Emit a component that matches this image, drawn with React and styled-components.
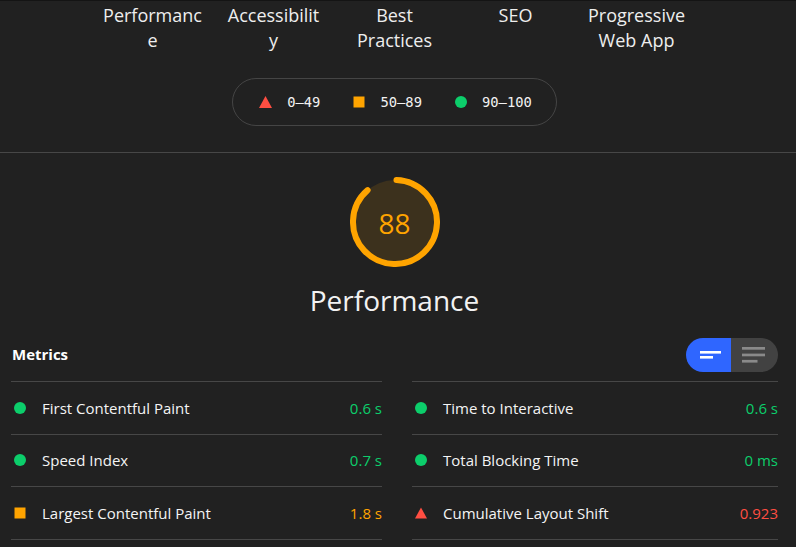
import React from "react";
import styled, { createGlobalStyle } from "styled-components";

const GlobalStyle = createGlobalStyle`
  html, body {
    margin: 0;
    padding: 0;
    background: #212121;
  }
  body {
    font-family: "Open Sans", "Noto Sans", sans-serif;
    color: #eeeeee;
    border-top: 1px solid #141414;
  }
`;

const Page = styled.div`
  width: 796px;
  height: 546px;
  overflow: hidden;
`;

const Header = styled.div`
  display: flex;
  flex-direction: column;
  align-items: center;
  padding: 2px 18px 26px 11px;
  border-bottom: 1px solid #474747;
`;

const CategoryRow = styled.div`
  display: flex;
  justify-content: center;
`;

const Category = styled.div`
  width: 121px;
  display: flex;
  justify-content: center;
`;

const CategoryLabel = styled.div`
  width: 99px;
  font-size: 18px;
  line-height: 25px;
  text-align: center;
  overflow-wrap: anywhere;
  color: #eeeeee;
`;

const Legend = styled.div`
  margin-top: 25px;
  height: 46px;
  display: flex;
  align-items: center;
  gap: 33px;
  padding: 0 24px 0 26px;
  border: 1px solid #454545;
  border-radius: 24px;
`;

const LegendItem = styled.div`
  display: flex;
  align-items: center;
  gap: 15px;
  font-family: "DejaVu Sans Mono", "Liberation Mono", monospace;
  font-size: 13.8px;
  color: #f2f2f2;
`;

const COLORS = {
  fail: "#ff4e42",
  average: "#ffa400",
  pass: "#0cce6b",
};

const Shape = ({ kind }) => {
  if (kind === "fail") {
    return (
      <svg width="13" height="12" viewBox="0 0 13 12">
        <polygon points="6.5,0 13,12 0,12" fill={COLORS.fail} />
      </svg>
    );
  }
  if (kind === "average") {
    return (
      <svg width="12" height="12" viewBox="0 0 12 12">
        <rect x="0.5" y="0.5" width="11" height="11" fill={COLORS.average} />
      </svg>
    );
  }
  return (
    <svg width="12" height="12" viewBox="0 0 12 12">
      <circle cx="6" cy="6" r="6" fill={COLORS.pass} />
    </svg>
  );
};

const Body = styled.div`
  padding: 0 18px 0 11px;
  display: flex;
  flex-direction: column;
`;

const Summary = styled.div`
  display: flex;
  flex-direction: column;
  align-items: center;
  padding-top: 24px;
`;

const Gauge = styled.div`
  position: relative;
  width: 90px;
  height: 90px;
`;

const Percentage = styled.div`
  position: absolute;
  inset: 0;
  display: flex;
  align-items: center;
  justify-content: center;
  font-size: 28px;
  color: #ffa400;
  padding-top: 1px;
`;

const Title = styled.div`
  margin-top: 15px;
  font-size: 28px;
  line-height: 36px;
  color: #f2f2f2;
`;

const MetricsHeader = styled.div`
  margin-top: 20px;
  margin-bottom: 9px;
  height: 34px;
  display: flex;
  align-items: center;
  justify-content: space-between;
`;

const MetricsTitle = styled.div`
  padding: 0 0 3px 1px;
  font-size: 15px;
  font-weight: 700;
  color: #ffffff;
`;

const Toggle = styled.div`
  display: flex;
  height: 34px;
  border-radius: 17px;
  overflow: hidden;
`;

const ToggleButton = styled.div`
  width: ${(p) => p.$w}px;
  display: flex;
  align-items: center;
  justify-content: ${(p) => (p.$active ? "flex-end" : "flex-start")};
  padding: ${(p) => (p.$active ? "0 10px 0 0" : "0 0 0 11px")};
  box-sizing: border-box;
  background: ${(p) => (p.$active ? "#2f66ff" : "#424242")};
`;

const Grid = styled.div`
  display: grid;
  grid-template-columns: 371px 1fr;
  column-gap: 30px;
`;

const Column = styled.div`
  border-top: 1px solid #474747;
`;

const MetricRow = styled.div`
  display: flex;
  align-items: center;
  height: 52.67px;
  padding: 0 0 0 3px;
  box-sizing: border-box;
  border-bottom: 1px solid #474747;
  font-size: 15px;
`;

const MetricIcon = styled.div`
  width: 12px;
  display: flex;
  margin-right: 16px;
`;

const MetricName = styled.div`
  flex: 1;
  color: #f4f4f4;
`;

const MetricValue = styled.div`
  color: ${(p) => COLORS[p.$kind]};
`;

const categories = [
  "Performance",
  "Accessibility",
  "Best Practices",
  "SEO",
  "Progressive Web App",
];

const left = [
  { name: "First Contentful Paint", value: "0.6 s", kind: "pass" },
  { name: "Speed Index", value: "0.7 s", kind: "pass" },
  { name: "Largest Contentful Paint", value: "1.8 s", kind: "average" },
];

const right = [
  { name: "Time to Interactive", value: "0.6 s", kind: "pass" },
  { name: "Total Blocking Time", value: "0 ms", kind: "pass" },
  { name: "Cumulative Layout Shift", value: "0.923", kind: "fail" },
];

const score = 88;
const circumference = 2 * Math.PI * 42;

function MetricList({ items }) {
  return (
    <Column>
      {items.map((m) => (
        <MetricRow key={m.name}>
          <MetricIcon>
            <Shape kind={m.kind} />
          </MetricIcon>
          <MetricName>{m.name}</MetricName>
          <MetricValue $kind={m.kind}>{m.value}</MetricValue>
        </MetricRow>
      ))}
    </Column>
  );
}

export default function App() {
  return (
    <Page>
      <GlobalStyle />
      <Header>
        <CategoryRow>
          {categories.map((c) => (
            <Category key={c}>
              <CategoryLabel>{c}</CategoryLabel>
            </Category>
          ))}
        </CategoryRow>
        <Legend>
          <LegendItem>
            <Shape kind="fail" />
            0–49
          </LegendItem>
          <LegendItem>
            <Shape kind="average" />
            50–89
          </LegendItem>
          <LegendItem>
            <Shape kind="pass" />
            90–100
          </LegendItem>
        </Legend>
      </Header>
      <Body>
        <Summary>
          <Gauge>
            <svg width="90" height="90" viewBox="0 0 90 90">
              <circle
                cx="45"
                cy="45"
                r="42"
                fill="rgba(255,164,0,0.12)"
                stroke="none"
              />
              <circle
                cx="45"
                cy="45"
                r="42"
                fill="none"
                stroke="#ffa400"
                strokeWidth="6"
                strokeLinecap="round"
                strokeDasharray={`${(score / 100) * circumference} ${circumference}`}
                transform="rotate(-88 45 45)"
              />
            </svg>
            <Percentage>{score}</Percentage>
          </Gauge>
          <Title>Performance</Title>
        </Summary>
        <MetricsHeader>
          <MetricsTitle>Metrics</MetricsTitle>
          <Toggle>
            <ToggleButton $active $w={45}>
              <svg width="21" height="8" viewBox="0 0 21 8">
                <rect x="0" y="0" width="21" height="2.6" fill="#fff" />
                <rect x="0" y="5" width="13" height="2.6" fill="#fff" />
              </svg>
            </ToggleButton>
            <ToggleButton $w={47}>
              <svg width="23" height="16" viewBox="0 0 23 16">
                <rect x="0" y="0" width="23" height="2.7" fill="#8a8a8a" />
                <rect x="0" y="6.6" width="23" height="2.7" fill="#8a8a8a" />
                <rect x="0" y="12.9" width="15.5" height="2.7" fill="#8a8a8a" />
              </svg>
            </ToggleButton>
          </Toggle>
        </MetricsHeader>
        <Grid>
          <MetricList items={left} />
          <MetricList items={right} />
        </Grid>
      </Body>
    </Page>
  );
}
